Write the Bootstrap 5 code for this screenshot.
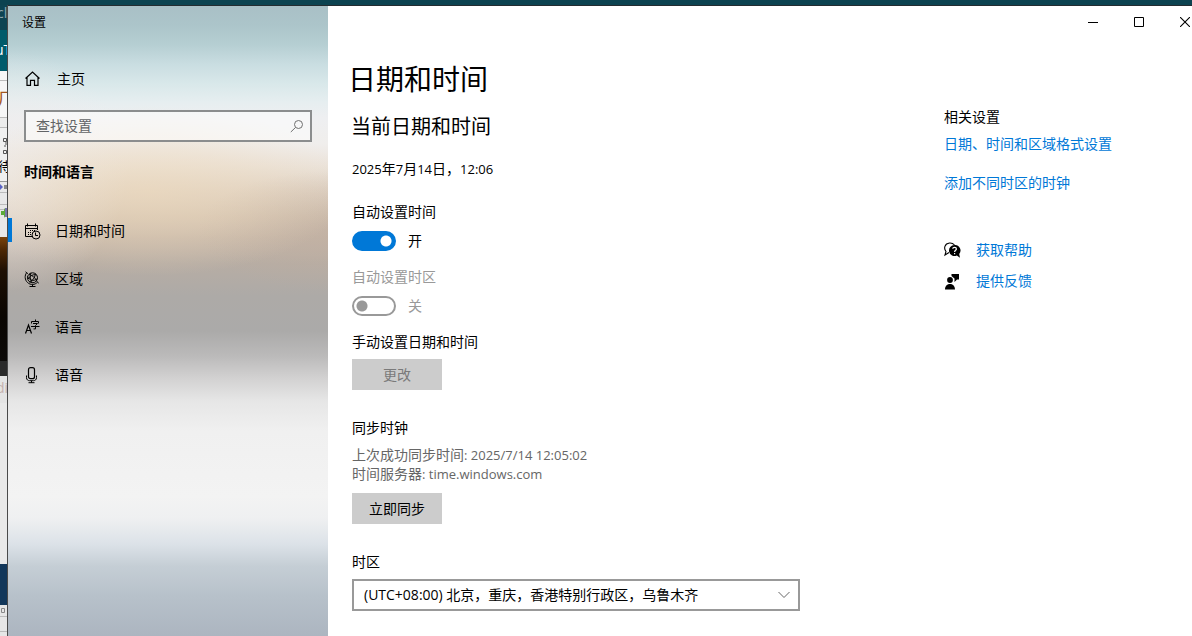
<!DOCTYPE html>
<html lang="zh-CN">
<head>
<meta charset="utf-8">
<meta name="viewport" content="width=device-width, initial-scale=1">
<title>设置</title>
<link href="https://cdn.jsdelivr.net/npm/bootstrap@5.3.0/dist/css/bootstrap.min.css" rel="stylesheet">
<style>
  body { font: 14px/20px "Open Sans", "Noto Sans CJK SC", sans-serif; color: #000; background: #0c4350; }
  .desktop { min-height: 100vh; padding-top: 5px; }
  .app-frame { border-top: 1px solid #242c30; min-width: 0; }
  .latin { font-size: 13px; line-height: 1; }
  /* sliver of the windows behind */
  .behind { width: 8px; border-right: 1px solid #4a4a4a; background: #ececec; white-space: nowrap; }
  .behind > div { overflow: hidden; flex: none; }
  .behind span { display: inline-block; }
  .b-head { height: 25px; background: #0d4452; color: #8fa9af; line-height: 16px; }
  .b-head span { margin-left: -3px; }
  .b-tab { height: 41px; background: #005b6b; color: #fff; line-height: 40px; }
  .b-tab span { margin-left: -5px; }
  .b-gap { height: 10px; border-bottom: 1px solid #bbb; background: #f7f7f7; }
  .b-char { height: 37px; border-bottom: 1px solid #bbb; color: #a4561d; font-size: 18px; line-height: 36px; background: #f6f6f6; }
  .b-char span { margin-left: -4px; }
  .b-wait { height: 55px; border-bottom: 1px solid #999; border-top: 1px solid #bbb; margin-top: 9px; font-size: 13px; background: #f0f0f0; }
  .b-wait span { margin-left: -2px; }
  .b-bar { height: 55px; background: #e8e8e8; }
  .b-photo { height: 124px; background: linear-gradient(#7a430c, #4a2604 14px, #1d0f03 34px, #0a0602 80px, #0c0a08); }
  .b-foot { height: 15px; background: #2a2a2a; }
  .b-word { height: 27px; background: #e4e4e4; color: #c6b2ae; font-size: 14px; line-height: 24px; }
  .b-word span { margin-left: -4px; }
  .b-page { height: 161px; background: #e9e9e9; }
  .b-navy { height: 41px; background: #12375a; }
  .b-last { flex: 1 0 auto !important; background: #e6e6e6; }

  .side {
    width: 320px; flex: none;
    background:
      radial-gradient(ellipse 200px 85px at 140px 185px, rgba(238,218,188,.6), rgba(238,218,188,.35) 50%, rgba(238,218,188,0)),
      radial-gradient(ellipse 120px 120px at 0 165px, rgba(238,236,236,.85), rgba(238,236,236,.5) 45%, rgba(238,236,236,0)),
      radial-gradient(ellipse 130px 60px at 320px 225px, rgba(190,172,158,.5), rgba(190,172,158,0)),
      linear-gradient(#a9c0c6 0, #acc5ca 20px, #b5ced2 38px, #c9dde1 58px, #d9e8ea 78px, #e6eef0 96px, #eeeff1 112px,
        #f0eeec 138px, #ebe3da 160px, #dfd2c4 185px, #d3c3b2 210px, #c5b6a8 232px, #b7ada4 258px, #adaaa7 290px,
        #abaaa9 325px, #bbbaba 350px, #d2d1d1 372px, #e6e6e6 395px, #f0f0f0 425px, #f3f3f3 490px, #eff0f1 512px,
        #dce2e8 538px, #c5ced5 560px, #b7c1ca 590px, #acb5c0 100%);
  }
  .side-title { font-size: 12px; line-height: 34px; height: 32px; padding-left: 14px; }
  .side-link { height: 48px; color: #000; text-decoration: none; display: flex; align-items: center; padding-left: 16px; gap: 14px; }
  .side-link.home { margin-top: 17px; gap: 16px; }
  .side-link svg { width: 17px; height: 17px; flex: none; }
  .side-link.current { position: relative; }
  .side-link.current::before { content: ""; position: absolute; left: 0; top: 11px; width: 4px; height: 24px; background: #0078d7; }
  .find { margin: 7px 16px 0; position: relative; }
  .find input { height: 32px; width: 100%; border: 2px solid #8b8d8e; border-radius: 0; background: rgba(255,255,255,.5); padding: 0 36px 2px 10px; color: #000; outline: 0; }
  .find input::placeholder { color: #626466; opacity: 1; }
  .find svg { position: absolute; right: 8px; top: 9px; }
  .side-head { font-size: 14px; line-height: 20px; font-weight: 700; margin: 20px 16px 25px; }

  .pane { background: #fff; min-width: 0; }
  .caption button { border: 0; background: none; width: 46px; height: 32px; padding: 0; display: flex; align-items: center; justify-content: center; }
  .caption button:last-child { width: 14px; margin-left: 16px; }
  .content { padding: 23px 24px 20px; }
  h1 { font-size: 28px; line-height: 36px; font-weight: 400; margin: 0 0 16px -4px; }
  h2.sub { font-size: 20px; line-height: 28px; font-weight: 400; margin: 0 0 18px -1px; }
  .now { margin: 0 0 23px; }
  .setting-label { display: block; font-size: 14px; line-height: 20px; margin: 0; font-weight: 400; }
  .toggle-row { display: flex; align-items: center; gap: 12px; height: 20px; margin: 9px 0 16px; }
  .toggle { appearance: none; width: 44px; height: 20px; margin: 0; border: 2px solid #999; border-radius: 10px; background: radial-gradient(circle at 8px 8px, #999 5px, transparent 6px); }
  .toggle:checked { border-color: #0078d7; background: radial-gradient(circle at 32px 8px, #fff 5px, #0078d7 6px); }
  .off { color: #999; }
  .flat { display: block; width: 90px; height: 31px; border: 0; border-radius: 0; background: #ccc; color: #000; padding: 0; margin: 7px 0 28px; font-size: 14px; line-height: 20px; }
  .flat:disabled { background: #ccc; color: #7a7a7a; opacity: 1; border: 0; }
  .sync-info { line-height: 19px; color: #666; margin: 7px 0 10px; }
  .sync-info + .flat { margin-top: 10px; }
  .zone { position: relative; max-width: 448px; margin-top: 7px; }
  .zone select { appearance: none; width: 100%; height: 32px; border: 2px solid #999; border-radius: 0; background: #fff; color: #000; padding: 0 30px 0 10px; }
  .zone svg { position: absolute; right: 10px; top: 12px; pointer-events: none; }
  .related { width: 248px; flex: none; padding-top: 69px; }
  .related a { color: #0078d7; text-decoration: none; }
  .related .first { margin-top: 7px; }
  .related .second { margin: 19px 0 47px; }
  .help { display: flex; align-items: center; gap: 15px; margin-bottom: 11px; }
</style>
</head>
<body>
<div class="desktop d-flex">
  <div class="behind d-flex flex-column flex-shrink-0 overflow-hidden" aria-hidden="true">
    <div class="b-head"><span>cl</span></div>
    <div class="b-tab"><span>uT</span></div>
    <div class="b-gap"></div>
    <div class="b-char"><span>几</span></div>
    <div class="b-wait">
      <svg width="7" height="28" viewBox="0 0 7 28" class="d-block" fill="none" stroke="#555"><path d="M3.500 10.500h3v3h-3zM3.500 22.500h3v3h-3zM6 14v3M4 18h2"/></svg>
      <span>待</span>
    </div>
    <div class="b-bar">
      <svg width="7" height="55" viewBox="0 0 7 55" class="d-block"><path d="M0 10.500h7M0 22.500h7M0 27.500h7" stroke="#bbb"/><path d="M0 2l3 3-3 3z" fill="#5962c4"/><path d="M4 3h3v4H4z" fill="#888"/><path d="M1 29h3v-3l3 5-3 5v-3H1z" fill="#5cab3a"/><path d="M5 26h2v9H5z" fill="#77a"/></svg>
    </div>
    <div class="b-photo"></div>
    <div class="b-foot"></div>
    <div class="b-word"><span>di</span></div>
    <div class="b-page"></div>
    <div class="b-navy"></div>
    <div class="b-last"><svg width="7" height="31" viewBox="0 0 7 31" class="d-block" fill="none"><path d="M0 11.500h7M0 26.500h7" stroke="#bbb"/><path d="M1.500 3.500h3v4h-3z" stroke="#888"/></svg></div>
  </div>

  <div class="app-frame d-flex flex-grow-1">
    <nav class="side" aria-label="设置">
      <div class="side-title">设置</div>
      <a class="side-link home" href="#">
        <svg viewBox="0 0 17 17" fill="none" stroke="#000" stroke-width="1.200"><path d="M1.500 7.500 8.500 1l7 6.500M3 6.500v7.900h3.500v-5h4v5H14V6.500"/></svg>
        <span>主页</span>
      </a>
      <div class="find">
        <input type="search" placeholder="查找设置" aria-label="查找设置">
        <svg width="14" height="15" viewBox="0 0 14 15" fill="none" stroke="#707070"><circle cx="8.500" cy="5.500" r="4"/><path d="M5.500 8.500.8 13"/></svg>
      </div>
      <h2 class="side-head">时间和语言</h2>
      <a class="side-link current" href="#" aria-current="page">
        <svg viewBox="0 0 17 17" fill="none" stroke="#000"><path d="M8 13.500H1.500v-11h12V7M1.500 5.500h12M3.500.5v3M11.500.5v3"/><path d="M6 7.500h1M8 7.500h1M10 7.500h1M4 9.500h1M6 9.500h1M4 11.500h1M6 11.500h1"/><circle cx="12" cy="12" r="4"/><path d="M11.500 9.500v3H14"/></svg>
        <span>日期和时间</span>
      </a>
      <a class="side-link" href="#">
        <svg viewBox="0 0 17 17" fill="none" stroke="#000"><circle cx="8.500" cy="6.800" r="5"/><path d="M5 3.500c3 .5 6 3 7.500 6M4 8c3-4 6-5 8.500-4M7 2c-1.500 3-1 7 1.500 9.600M11 2.500c.5 3-1.500 6.500-5.500 8.500M3.500 5.500c2 4 6 5 9.500 2.500"/><path d="M2.800 1.500C.3 4.500.8 9 3.500 11.500c3 2.800 7.300 2.600 10-.3M1.500.8l2.300 2M12.300 10l2.500 2.200M8.500 13.500v2M5.500 15.500h6"/></svg>
        <span>区域</span>
      </a>
      <a class="side-link" href="#">
        <svg viewBox="0 0 17 17" fill="none" stroke="#000"><path d="M1.500 14.500 4.500 6l3 8.500M2.500 11.500h4" stroke-width="1.200"/><path d="M11.500.5v2M7.500 4.500v-2h7v2M9 4.500h4.500l-2 2v3.400H9.500M7 7.500h8.500"/></svg>
        <span>语言</span>
      </a>
      <a class="side-link" href="#">
        <svg viewBox="0 0 17 17" fill="none" stroke="#000"><rect x="4.500" y=".7" width="6" height="11" rx="2" stroke-width="1.200"/><path d="M2.500 8.500v2.200c0 2 1.500 3 3 3h4c1.500 0 3-1 3-3V8.500M7.500 13.700v2M4.500 15.700h6"/></svg>
        <span>语音</span>
      </a>
    </nav>

    <div class="pane flex-grow-1">
      <div class="caption d-flex justify-content-end">
        <button type="button" aria-label="最小化"><svg width="10" height="10"><path d="M0 5.500h10" stroke="#000"/></svg></button>
        <button type="button" aria-label="最大化"><svg width="10" height="10"><path d="M.5.5h9v9h-9z" fill="none" stroke="#000"/></svg></button>
        <button type="button" aria-label="关闭"><svg width="10" height="10"><path d="m0 0 10 10M10 0 0 10" stroke="#000" stroke-width="1.100"/></svg></button>
      </div>
      <div class="d-flex">
        <main class="content flex-grow-1">
          <h1>日期和时间</h1>
          <h2 class="sub">当前日期和时间</h2>
          <p class="now"><span class="latin">2025</span>年<span class="latin">7</span>月<span class="latin">14</span>日，<span class="latin">12:06</span></p>

          <label class="setting-label" for="autoTime">自动设置时间</label>
          <div class="toggle-row"><input class="toggle" type="checkbox" role="switch" id="autoTime" checked><span>开</span></div>

          <label class="setting-label off" for="autoZone">自动设置时区</label>
          <div class="toggle-row off"><input class="toggle" type="checkbox" role="switch" id="autoZone" disabled><span>关</span></div>

          <h3 class="setting-label">手动设置日期和时间</h3>
          <button class="btn flat" type="button" disabled>更改</button>

          <h3 class="setting-label">同步时钟</h3>
          <div class="sync-info">上次成功同步时间<span class="latin">: 2025/7/14 12:05:02</span><br>时间服务器<span class="latin">: time.windows.com</span></div>
          <button class="btn flat" type="button">立即同步</button>

          <label class="setting-label" for="zone">时区</label>
          <div class="zone">
            <select id="zone"><option>(UTC+08:00) 北京，重庆，香港特别行政区，乌鲁木齐</option></select>
            <svg width="12" height="8" viewBox="0 0 12 8" fill="none" stroke="#666"><path d="m.5 1 5.500 5.500L11.500 1"/></svg>
          </div>
        </main>

        <aside class="related">
          <h3 class="setting-label">相关设置</h3>
          <div class="first"><a href="#">日期、时间和区域格式设置</a></div>
          <div class="second"><a href="#">添加不同时区的时钟</a></div>
          <div class="help">
            <svg width="17" height="17" viewBox="0 0 17 17"><path d="M5 10.500 1 13l1-3.500C-.5 6.500.5 1.500 5.500 1c2.500-.2 4 .8 5 2" fill="none" stroke="#000" stroke-width="1.100"/><path d="M10.500 3a5.500 5.500 0 1 0 2.300 10.500L16 15.700l-.8-3.700A5.500 5.500 0 0 0 10.500 3z"/><path d="M8.700 6.800c.2-2 3.700-2 3.700.1 0 1.300-1.800 1.300-1.800 3M10.600 11v1.300" fill="none" stroke="#fff" stroke-width="1.200"/></svg>
            <a href="#">获取帮助</a>
          </div>
          <div class="help">
            <svg width="17" height="17" viewBox="0 0 17 17"><circle cx="6" cy="7" r="2.900"/><path d="M1 16.500c0-7.300 10-7.300 10 0zM7.500 1H15v5.500h-2L10.500 9V5.500L7.500 3z"/></svg>
            <a href="#">提供反馈</a>
          </div>
        </aside>
      </div>
    </div>
  </div>
</div>
<script src="https://cdn.jsdelivr.net/npm/bootstrap@5.3.0/dist/js/bootstrap.bundle.min.js"></script>
</body>
</html>
